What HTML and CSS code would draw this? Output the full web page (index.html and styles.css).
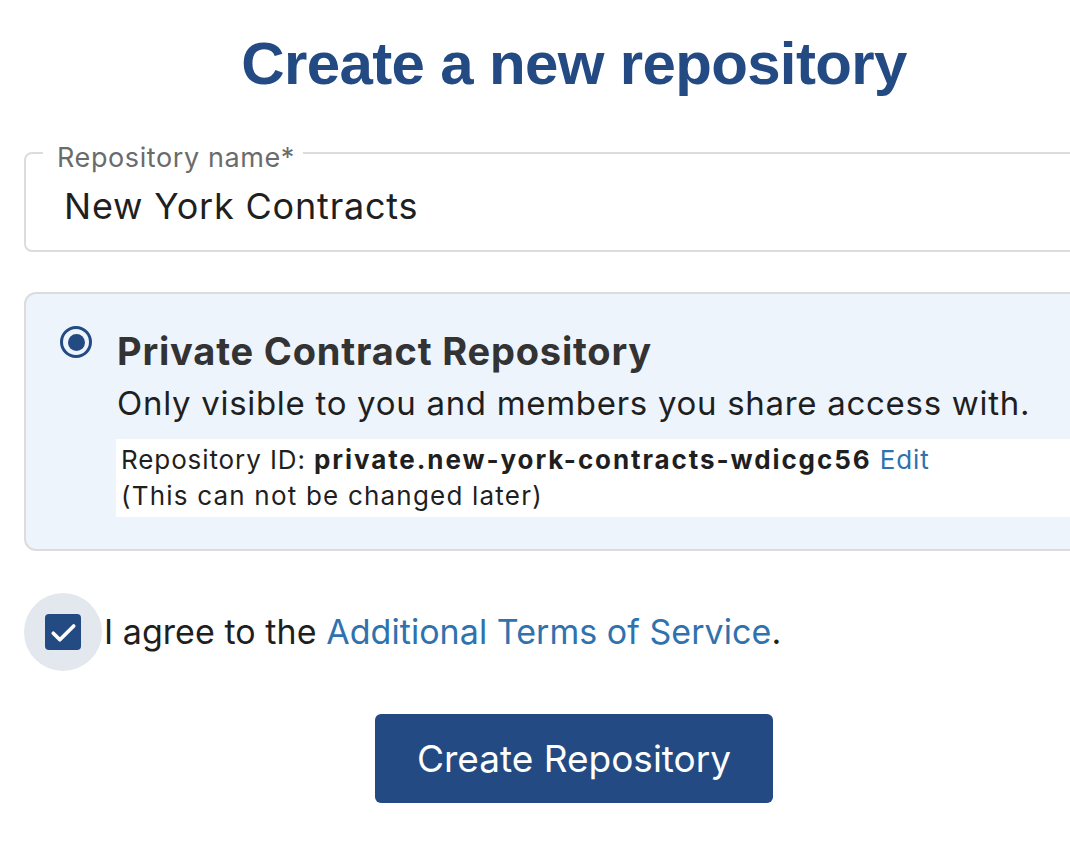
FILE: index.html
```html
<!DOCTYPE html>
<html lang="en">
<head>
<meta charset="utf-8">
<title>Create a new repository</title>
<link rel="stylesheet" href="styles.css">
</head>
<body>
<main class="page">
  <h1 class="title">Create a new repository</h1>

  <fieldset class="field">
    <legend class="field-label">Repository name*</legend>
    <div class="field-value">New York Contracts</div>
  </fieldset>

  <section class="option-card">
    <span class="radio"><span class="radio-dot"></span></span>
    <div class="option-body">
      <div class="option-title">Private Contract Repository</div>
      <div class="option-desc">Only visible to you and members you share access with.</div>
      <div class="repo-id">
        <div>Repository ID: <strong>private.new-york-contracts-wdicgc56</strong> <a class="link" href="#">Edit</a></div>
        <div class="repo-note">(This can not be changed later)</div>
      </div>
    </div>
  </section>

  <label class="agree">
    <span class="check-ring">
      <span class="check-box">
        <svg viewBox="0 0 24 24" width="35" height="35"><path d="M5 12.5l4.5 4.5L19 7.5" fill="none" stroke="#fff" stroke-width="2.5" stroke-linecap="round" stroke-linejoin="round"/></svg>
      </span>
    </span>
    <span class="agree-text">I agree to the <a class="link" href="#">Additional Terms of Service</a>.</span>
  </label>

  <div class="actions">
    <button class="btn-primary" type="button">Create Repository</button>
  </div>
</main>
</body>
</html>
```

FILE: styles.css
```css
html, body {
  margin: 0;
  padding: 0;
  background: #ffffff;
}

body {
  font-family: Inter, "Noto Sans", "DejaVu Sans", sans-serif;
  color: #1f1f1f;
  overflow: hidden;
}

.page {
  width: 1100px;
  margin-left: 24px;
}

.title {
  margin: 28px 0 0;
  font-family: "Liberation Sans", Arial, sans-serif;
  font-weight: 700;
  font-size: 60px;
  line-height: 72px;
  color: #234a82;
  text-align: center;
  letter-spacing: -0.65px;
}

.field {
  margin: 34px 0 0;
  padding: 0 17px;
  border: 2px solid #dcdcdc;
  border-radius: 8px;
  height: 118px;
  box-sizing: border-box;
}

.field-label {
  padding: 10px 8px 0 14px;
  font-size: 27px;
  line-height: 28px;
  letter-spacing: 0.6px;
  color: #6b6b6b;
}

.field-value {
  padding-left: 21px;
  margin-top: 12px;
  font-size: 36px;
  line-height: 44px;
  letter-spacing: 0.8px;
  color: #1f1f1f;
}

.option-card {
  margin-top: 40px;
  display: flex;
  align-items: flex-start;
  gap: 25px;
  padding: 35px 30px 32px 34px;
  border: 2px solid #dcdcdc;
  border-radius: 12px;
  background: #edf4fc;
}

.radio {
  flex: none;
  width: 32px;
  height: 32px;
  box-sizing: border-box;
  margin-top: -3px;
  border: 3.5px solid #234a82;
  border-radius: 50%;
  display: flex;
  align-items: center;
  justify-content: center;
}

.radio-dot {
  width: 17px;
  height: 17px;
  border-radius: 50%;
  background: #234a82;
}

.option-body {
  flex: 1;
}

.option-title {
  font-size: 38px;
  line-height: 44px;
  font-weight: 700;
  letter-spacing: 0.8px;
  color: #333333;
}

.option-desc {
  margin-top: 8px;
  font-size: 33px;
  line-height: 44px;
  letter-spacing: 0.7px;
  color: #1f1f1f;
}

.repo-id {
  margin-top: 14px;
  margin-left: -1px;
  padding: 3px 5px;
  background: #ffffff;
  font-size: 26px;
  line-height: 36px;
  letter-spacing: 0.9px;
  color: #1f1f1f;
}

.repo-id strong {
  font-weight: 700;
  letter-spacing: 1.9px;
}

.repo-note {
  letter-spacing: 1.2px;
}

.link {
  color: #2f72ad;
  text-decoration: none;
}

.agree {
  margin-top: 42px;
  display: flex;
  align-items: center;
  gap: 2px;
}

.check-ring {
  width: 78px;
  height: 78px;
  border-radius: 50%;
  background: #e3e8ef;
  display: flex;
  align-items: center;
  justify-content: center;
}

.check-box {
  width: 36px;
  height: 36px;
  border-radius: 4px;
  background: #234a82;
  display: flex;
  align-items: center;
  justify-content: center;
}

.agree-text {
  font-size: 34px;
  line-height: 44px;
  letter-spacing: 0.05px;
  color: #1f1f1f;
}

.actions {
  margin-top: 43px;
  display: flex;
  justify-content: center;
}

.btn-primary {
  height: 89px;
  padding: 0 42px;
  border: none;
  border-radius: 6px;
  background: #234a82;
  color: #ffffff;
  font-family: Inter, "Noto Sans", sans-serif;
  font-size: 37px;
  cursor: pointer;
}
```
